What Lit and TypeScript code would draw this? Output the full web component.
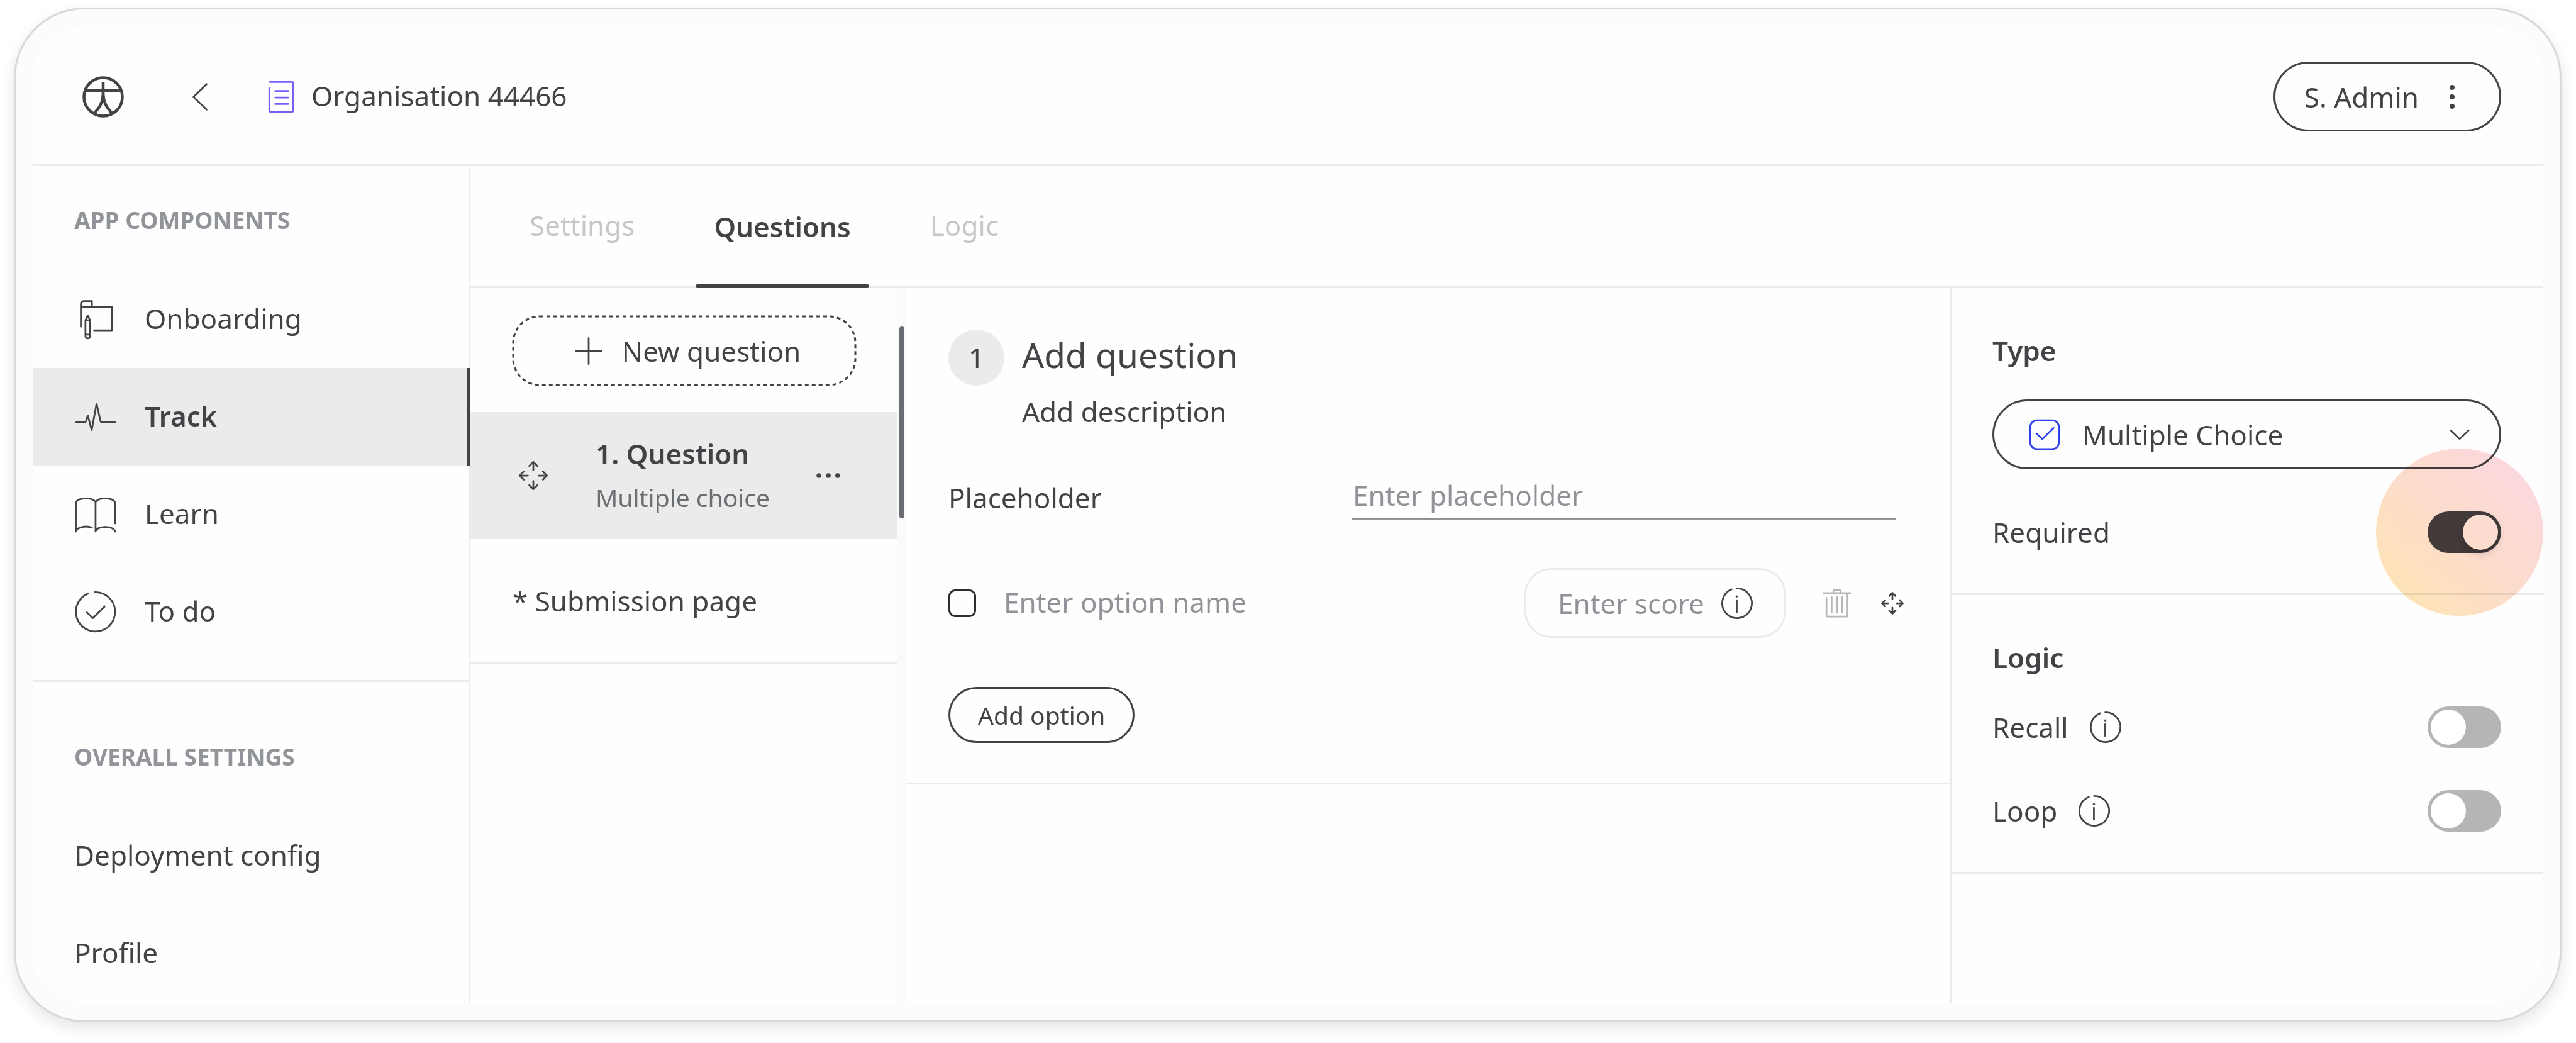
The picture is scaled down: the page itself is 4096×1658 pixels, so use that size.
import { LitElement, html, css, svg, TemplateResult, SVGTemplateResult } from "lit";
import { customElement, property, state } from "lit/decorators.js";
import { classMap } from "lit/directives/class-map.js";

/* Icon shapes live on a 96-unit grid, the compact ones on a 72-unit grid. */
const arrowCross = (tip: number, tail: number, head: number) => svg`
  ${[0, 90, 180, 270].map(
    (turn) => svg`<path transform="rotate(${turn} 48 48)"
      d="M48 ${48 - tail}V${48 - tip}M${48 - head} ${48 - tip + head}L48 ${48 - tip}L${48 + head} ${48 - tip + head}" />`
  )}`;

const ICONS: Record<string, { size: number; shape: SVGTemplateResult }> = {
  logo: {
    size: 96,
    shape: svg`<g stroke-width="6.6" stroke-linecap="butt">
      <circle cx="48" cy="48" r="44.4" />
      <path d="M48 14.3V38M8 33H88M48 36C48 62 39 74 27 86M48 36C48 62 57 74 69 86" /></g>`,
  },
  back: { size: 96, shape: svg`<path d="M63.3 18.5L33 48L63.3 77.5" />` },
  form: {
    size: 96,
    shape: svg`<path d="M22 13.5H73.8Q75.3 13.5 75.3 15V81Q75.3 82.5 73.8 82.5H22.2Q20.7 82.5 20.7 81V27M34.4 34.5H64.7M34.4 49.5H64.7M34.4 64.5H64.7" />`,
  },
  onboarding: {
    size: 96,
    shape: svg`<path d="M15.4 64.6V12Q15.4 5.4 22 5.4H41V18.4M15.4 12Q15.4 18.4 22 18.4H87V73H46" />
      <path d="M31.4 38.5L26 49.7V86Q26 91.4 31.4 91.4Q36.7 91.4 36.7 86V49.7ZM26 49.7H36.7M26 82.6H36.7" />`,
  },
  track: {
    size: 96,
    shape: svg`<path d="M4.7 60H24.6Q26.4 60 27 58L31.4 44.5L40.4 78L51.7 17L61 58Q61.6 60 63.4 60H95" />`,
  },
  learn: {
    size: 96,
    shape: svg`<path d="M3.7 87.3V20C10 8 42 8 49.4 19C57 8 88 8 95 20V68.4M49.4 19V87.3M3.7 86C8 76 28 73 41 78.3M49.4 86C55 73 90 73 95 87.3" />`,
  },
  todo: {
    size: 96,
    shape: svg`<path d="M47.7 2A45.4 45.4 0 1 1 32.4 5.2M29.4 48.8L41.6 61.2Q42.8 62.4 44 61.2L70.4 35" />`,
  },
  plus: { size: 96, shape: svg`<path d="M18 48H78M48 18V78" />` },
  drag: { size: 96, shape: arrowCross(31.6, 12.5, 9.4) },
  dragSmall: { size: 96, shape: arrowCross(24, 10, 7.2) },
  more: {
    size: 96,
    shape: svg`<g fill="currentColor" stroke="none"><circle cx="26.3" cy="48" r="5.6" /><circle cx="48" cy="48" r="5.6" /><circle cx="69.7" cy="48" r="5.6" /></g>`,
  },
  kebab: {
    size: 96,
    shape: svg`<g fill="currentColor" stroke="none"><circle cx="48" cy="26.2" r="5.8" /><circle cx="48" cy="48" r="5.8" /><circle cx="48" cy="69.8" r="5.8" /></g>`,
  },
  trash: {
    size: 96,
    shape: svg`<path d="M17 24.7H79.7M39.5 24.7V18.5Q39.5 17 41 17H54.7Q56.2 17 56.2 18.5V24.7M23.5 35.3V77.2Q23.5 78.7 25 78.7H70.6Q72.1 78.7 72.1 77.2V24.7M35.4 34V69M47.8 34V69M60.1 34V69" />`,
  },
  chevron: { size: 96, shape: svg`<path d="M27.4 38L48 58L68.6 38" />` },
  info: {
    size: 72,
    shape: svg`<path d="M35.6 2A34 34 0 1 1 23.4 4.4M35.2 29V56" /><circle cx="35.2" cy="20.4" r="2.4" fill="currentColor" stroke="none" />`,
  },
  check: {
    size: 72,
    shape: svg`<rect x="3" y="3" width="66" height="66" rx="16" /><path d="M17.6 33.6L31 46L56.6 20.4" />`,
  },
};

@customElement("app-icon")
export class AppIcon extends LitElement {
  static styles = css`
    :host {
      display: block;
      flex: none;
      width: 66px;
      height: 66px;
    }
    :host([compact]) {
      width: 50px;
      height: 50px;
    }
    .glyph {
      display: block;
      width: 100%;
      height: 100%;
      overflow: visible;
      fill: none;
      stroke: currentColor;
      stroke-width: 4;
      stroke-linecap: round;
      stroke-linejoin: round;
    }
  `;

  @property() name = "plus";

  render(): TemplateResult {
    const { size, shape } = ICONS[this.name];
    return html`<svg class="glyph" viewBox="0 0 ${size} ${size}" aria-hidden="true">${shape}</svg>`;
  }
}

interface NavEntry {
  label: string;
  icon?: string;
}

const COMPONENTS: NavEntry[] = [
  { label: "Onboarding", icon: "onboarding" },
  { label: "Track", icon: "track" },
  { label: "Learn", icon: "learn" },
  { label: "To do", icon: "todo" },
];
const SETTINGS: NavEntry[] = [{ label: "Deployment config" }, { label: "Profile" }];
const TABS = ["Settings", "Questions", "Logic"];

@customElement("app-root")
export class AppRoot extends LitElement {
  static styles = css`
    :host {
      --ink: #434347;
      --muted: #8f9398;
      --line: #ebebeb;
      --fill: #ebebeb;
      --page: #fefefe;
      display: flex;
      box-sizing: border-box;
      min-height: 100vh;
      padding: 12px 23px 33px 22px;
      background: #ffffff;
      color: var(--ink);
      font-family: "Noto Sans", "Open Sans", sans-serif;
      font-size: 44px;
      line-height: 66px;
    }
    *,
    *::before,
    *::after {
      box-sizing: border-box;
    }
    h1,
    h2,
    h3,
    p,
    ul {
      margin: 0;
      padding: 0;
      font: inherit;
      list-style: none;
    }
    button,
    input,
    select {
      margin: 0;
      padding: 0;
      border: 0;
      background: none;
      color: inherit;
      font: inherit;
      text-align: left;
      outline: none;
      appearance: none;
    }
    button {
      cursor: pointer;
    }
    input::placeholder {
      color: var(--muted);
      opacity: 1;
    }
    .window {
      flex: 1;
      display: flex;
      min-width: 0;
      padding: 27px;
      border: 3px solid #d9d9d9;
      border-radius: 112px;
      background: #fcfcfc;
      box-shadow: 0 10px 24px rgba(0, 0, 0, 0.1);
    }
    .surface {
      flex: 1;
      display: flex;
      flex-direction: column;
      min-width: 0;
      border-radius: 82px;
      background: var(--page);
    }

    .header {
      display: flex;
      align-items: center;
      padding: 56px 66px 52px 79px;
      border-bottom: 3px solid var(--line);
    }
    .back {
      margin-left: 88px;
    }
    .crumb {
      display: flex;
      align-items: center;
      gap: 15px;
      margin-left: 63px;
    }
    .crumb-icon {
      color: #7a5cf6;
    }
    .crumb-title,
    .nav-label {
      padding-bottom: 3px;
    }
    .account {
      display: flex;
      align-items: center;
      gap: 20px;
      height: 111px;
      margin-left: auto;
      padding: 0 42px 0 46px;
      border: 3px solid var(--ink);
      border-radius: 56px;
    }

    .body {
      flex: 1;
      display: flex;
      min-width: 0;
    }
    .sidebar {
      flex: none;
      width: 696px;
      border-right: 3px solid var(--line);
    }
    .group {
      padding: 61px 0 31px;
      border-bottom: 3px solid var(--line);
    }
    .group:last-child {
      padding: 94px 0 0;
      border-bottom: 0;
    }
    .group-title {
      padding: 0 66px;
      margin-bottom: 55px;
      color: #919499;
      font-size: 37px;
      font-weight: 700;
      line-height: 50px;
    }
    .nav-item {
      display: flex;
      align-items: center;
      gap: 46px;
      height: 155px;
      padding: 0 66px;
      color: inherit;
      text-decoration: none;
    }
    .nav-item.current {
      margin-right: -3px;
      border-right: 6px solid var(--ink);
      background: var(--fill);
      font-weight: 600;
    }

    .content {
      flex: 1;
      display: flex;
      flex-direction: column;
      min-width: 0;
    }
    .tabs {
      display: flex;
      gap: 68px;
      height: 194px;
      padding: 0 65px;
      border-bottom: 3px solid var(--line);
    }
    .tab {
      position: relative;
      padding: 0 29px 4px;
      color: #c6c7c9;
    }
    .tab.current {
      padding-bottom: 0;
      color: var(--ink);
      font-weight: 600;
    }
    .tab.current::after {
      content: "";
      position: absolute;
      inset: auto 0 -3px;
      height: 6px;
      border-radius: 3px;
      background: var(--ink);
    }

    .panes {
      flex: 1;
      display: flex;
      min-width: 0;
    }
    .list {
      flex: none;
      width: 679px;
    }
    .list-top {
      padding: 44px 66px 42px 67px;
    }
    .new-question {
      position: relative;
      display: flex;
      align-items: center;
      justify-content: center;
      gap: 20px;
      width: 100%;
      height: 111px;
    }
    .dashes {
      position: absolute;
      inset: 0;
      width: 100%;
      height: 100%;
      overflow: visible;
      fill: none;
      stroke: var(--ink);
      stroke-width: 3;
      stroke-dasharray: 6 5;
    }
    .dashes-frame {
      x: 1px;
      y: 1px;
      width: calc(100% - 2px);
      height: calc(100% - 2px);
      rx: 42px;
    }
    .question {
      display: flex;
      align-items: center;
      height: 202px;
      padding: 0 77px 0 67px;
      background: var(--fill);
    }
    .question-text {
      flex: 1;
      margin-left: 66px;
      line-height: 70px;
      white-space: nowrap;
    }
    .question-name {
      font-weight: 600;
    }
    .question-kind {
      color: #6b6f74;
      font-size: 39px;
    }
    .submission {
      display: flex;
      align-items: center;
      height: 199px;
      padding: 0 67px;
      border-bottom: 3px solid var(--line);
    }
    .scroll-track {
      flex: none;
      width: 13px;
      padding: 61px 2px 0 3px;
      background: #fafafa;
    }
    .scroll-thumb {
      height: 305px;
      border-radius: 4px;
      background: #6a6e73;
    }

    .editor {
      flex: 1;
      min-width: 0;
    }
    .editor-form {
      padding: 66px 59px 63px 68px;
      border-bottom: 3px solid var(--line);
    }
    .lead {
      display: flex;
      gap: 28px;
    }
    .number {
      flex: none;
      width: 89px;
      height: 89px;
      border-radius: 50%;
      background: var(--fill);
      line-height: 89px;
      text-align: center;
    }
    .lead-title {
      font-size: 55px;
      line-height: 80px;
    }
    .lead-note {
      margin-top: 17px;
    }
    .field {
      display: flex;
      align-items: center;
      margin-top: 66px;
      padding-right: 28px;
    }
    .field-label {
      flex: 1;
      padding-top: 3px;
    }
    .field-input {
      flex: none;
      width: 865px;
      height: 73px;
      padding: 0 2px 3px;
      border-bottom: 3px solid var(--muted);
    }
    .option {
      display: flex;
      align-items: center;
      margin-top: 77px;
    }
    .option-tick {
      flex: none;
      width: 44px;
      height: 44px;
      border: 3px solid #2c2c2e;
      border-radius: 11px;
    }
    .option-name {
      flex: 1;
      min-width: 0;
      margin: 0 44px;
      padding-bottom: 4px;
      height: 66px;
    }
    .score {
      display: flex;
      align-items: center;
      gap: 25px;
      height: 111px;
      padding: 0 50px;
      border: 3px solid var(--line);
      border-radius: 42px;
    }
    .score-input {
      width: 235px;
      height: 66px;
    }
    .delete {
      margin: 0 22px 0 48px;
      color: #b5b7b9;
    }
    .add-option {
      height: 89px;
      margin-top: 78px;
      padding: 0 44px;
      border: 3px solid var(--ink);
      border-radius: 45px;
      font-size: 39px;
    }

    .options {
      flex: none;
      width: 942px;
      border-left: 3px solid var(--line);
    }
    .block {
      padding: 66px 66px 64px 64px;
      border-bottom: 3px solid var(--line);
    }
    .block-title {
      font-weight: 600;
    }
    .type {
      position: relative;
      display: flex;
      align-items: center;
      margin-top: 45px;
    }
    .type-select {
      width: 100%;
      height: 111px;
      padding-left: 140px;
      border: 3px solid var(--ink);
      border-radius: 56px;
    }
    .type-icon,
    .type-chevron {
      position: absolute;
      pointer-events: none;
    }
    .type-icon {
      left: 58px;
      color: #2d40ea;
    }
    .type-chevron {
      right: 33px;
    }
    .switch-row {
      display: flex;
      align-items: center;
      margin-top: 67px;
    }
    .block-title + .switch-row {
      margin-top: 45px;
    }
    .info {
      margin-left: 34px;
    }
    .switch {
      position: relative;
      margin-left: auto;
      height: 66px;
    }
    .switch-input {
      display: flex;
      align-items: center;
      width: 117px;
      height: 66px;
      padding: 0 5px;
      border-radius: 33px;
      background: #b4b5b7;
    }
    .switch-input::before {
      content: "";
      width: 56px;
      height: 56px;
      border-radius: 50%;
      background: #ffffff;
    }
    .switch-input:checked {
      justify-content: flex-end;
      background: var(--ink);
    }
    .switch-input:checked::before {
      box-shadow: 0 6px 14px rgba(0, 0, 0, 0.18);
    }
    .spotlight {
      position: absolute;
      inset: -100px -67px -100px -82px;
      border-radius: 50%;
      background: linear-gradient(to top right, #ffe4b8 14%, #fdddcd 50%, #fcd9de 86%);
      mix-blend-mode: multiply;
      pointer-events: none;
    }
  `;

  @state() private section = "Track";
  @state() private tab = "Questions";

  private navItem({ label, icon }: NavEntry) {
    const current = this.section === label;
    return html`<li>
      <a class=${classMap({ "nav-item": true, current })} href="#${label.toLowerCase().replace(/ /g, "-")}"
        @click=${() => (this.section = label)}>
        ${icon ? html`<app-icon name=${icon}></app-icon>` : ""}<span class="nav-label">${label}</span>
      </a>
    </li>`;
  }

  private switchRow(id: string, label: string, on: boolean, info: boolean, highlighted = false) {
    return html`<div class="switch-row">
      <label for=${id}>${label}</label>
      ${info ? html`<app-icon class="info" name="info" compact></app-icon>` : ""}
      <div class="switch">
        <input class="switch-input" id=${id} type="checkbox" role="switch" ?checked=${on} />
        ${highlighted ? html`<div class="spotlight"></div>` : ""}
      </div>
    </div>`;
  }

  render(): TemplateResult {
    return html`<div class="window"><div class="surface">
      <header class="header">
        <app-icon name="logo"></app-icon>
        <button class="back" aria-label="Back"><app-icon name="back"></app-icon></button>
        <div class="crumb">
          <app-icon class="crumb-icon" name="form"></app-icon>
          <h1 class="crumb-title">Organisation 44466</h1>
        </div>
        <button class="account"><span>S. Admin</span><app-icon name="kebab"></app-icon></button>
      </header>

      <div class="body">
        <nav class="sidebar">
          <section class="group">
            <h2 class="group-title">APP COMPONENTS</h2>
            <ul>${COMPONENTS.map((entry) => this.navItem(entry))}</ul>
          </section>
          <section class="group">
            <h2 class="group-title">OVERALL SETTINGS</h2>
            <ul>${SETTINGS.map((entry) => this.navItem(entry))}</ul>
          </section>
        </nav>

        <div class="content">
          <div class="tabs" role="tablist">
            ${TABS.map(
              (name) => html`<button class=${classMap({ tab: true, current: this.tab === name })} role="tab"
                aria-selected=${this.tab === name} @click=${() => (this.tab = name)}>${name}</button>`
            )}
          </div>

          <div class="panes">
            <section class="list">
              <div class="list-top">
                <button class="new-question">
                  <svg class="dashes" aria-hidden="true"><rect class="dashes-frame" /></svg>
                  <app-icon name="plus"></app-icon><span>New question</span>
                </button>
              </div>
              <div class="question">
                <app-icon name="drag"></app-icon>
                <div class="question-text">
                  <p class="question-name">1. Question</p>
                  <p class="question-kind">Multiple choice</p>
                </div>
                <button aria-label="More actions"><app-icon name="more"></app-icon></button>
              </div>
              <div class="submission">* Submission page</div>
            </section>
            <div class="scroll-track"><div class="scroll-thumb"></div></div>

            <main class="editor">
              <div class="editor-form">
                <div class="lead">
                  <span class="number">1</span>
                  <div>
                    <h2 class="lead-title">Add question</h2>
                    <p class="lead-note">Add description</p>
                  </div>
                </div>
                <div class="field">
                  <label class="field-label" for="placeholder">Placeholder</label>
                  <input class="field-input" id="placeholder" type="text" placeholder="Enter placeholder" />
                </div>
                <div class="option">
                  <input class="option-tick" type="checkbox" aria-label="Option selected" />
                  <input class="option-name" type="text" aria-label="Option name" placeholder="Enter option name" />
                  <div class="score">
                    <input class="score-input" type="text" aria-label="Score" placeholder="Enter score" />
                    <app-icon name="info" compact></app-icon>
                  </div>
                  <button class="delete" aria-label="Delete option"><app-icon name="trash"></app-icon></button>
                  <app-icon name="dragSmall"></app-icon>
                </div>
                <button class="add-option">Add option</button>
              </div>
            </main>

            <aside class="options">
              <section class="block">
                <label class="block-title" for="type">Type</label>
                <div class="type">
                  <select class="type-select" id="type"><option>Multiple Choice</option></select>
                  <app-icon class="type-icon" name="check" compact></app-icon>
                  <app-icon class="type-chevron" name="chevron"></app-icon>
                </div>
                ${this.switchRow("required", "Required", true, false, true)}
              </section>
              <section class="block">
                <h3 class="block-title">Logic</h3>
                ${this.switchRow("recall", "Recall", false, true)}
                ${this.switchRow("loop", "Loop", false, true)}
              </section>
            </aside>
          </div>
        </div>
      </div>
    </div></div>`;
  }
}
